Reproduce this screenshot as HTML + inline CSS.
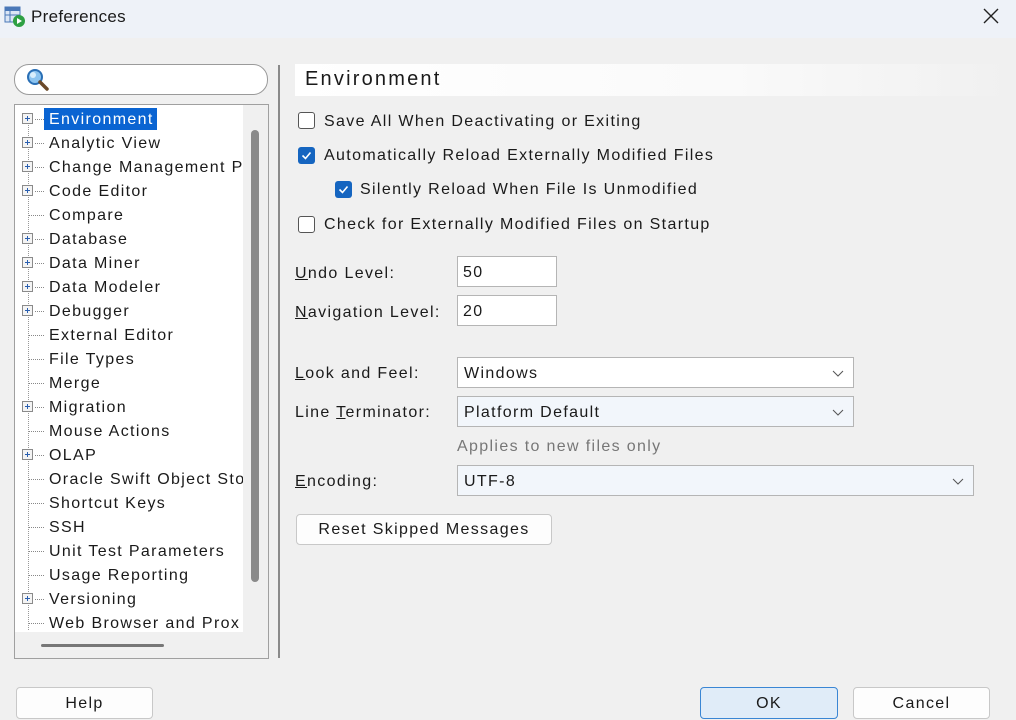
<!DOCTYPE html>
<html><head><style>
*{margin:0;padding:0;box-sizing:border-box}
body{width:1016px;height:718px;background:#f0f0f0;font-family:"Liberation Sans","DejaVu Sans",sans-serif;font-size:16px;color:#1a1a1a;position:relative;overflow:hidden;letter-spacing:1.35px}
.a{position:absolute}
.title{left:0;top:0;width:1016px;height:38px;background:#eef2f8}
.row{position:absolute;left:49px;height:22px;line-height:24px;white-space:nowrap}
.pl{position:absolute;left:22px;width:11px;height:11px;border:1px solid #8a8a8a;background:#f4f4f4}
.pl:before{content:"";position:absolute;left:2px;top:4px;width:5px;height:1px;background:#2a5fb0}
.pl:after{content:"";position:absolute;left:4px;top:2px;width:1px;height:5px;background:#2a5fb0}
.dh{position:absolute;height:0;border-top:1px dotted #888}
.cb{position:absolute;width:17px;height:17px;border:1.5px solid #555;border-radius:3px;background:#fff}
.cbx{position:absolute;width:17px;height:17px;border-radius:3px;background:#1565c0}
.cbx svg{position:absolute;left:3px;top:3px}
.lbl{position:absolute;white-space:nowrap;margin-top:2px}
.inp{position:absolute;background:#fff;border:1px solid #b5b5b5;height:31px;line-height:31px;padding-left:5px}
.sel{position:absolute;border:1px solid #b5b5b5;height:31px;line-height:31px;padding-left:6px}
.sel svg{position:absolute;right:9px;top:12px}
.btn{position:absolute;border:1px solid #c8c8c8;border-radius:4px;background:#fdfdfd;text-align:center;height:30px;line-height:30px}
u{text-decoration:underline}
</style></head><body>
<div class="a title"></div>
<svg class="a" style="left:4px;top:6px" width="22" height="22" viewBox="0 0 22 22"><rect x="1" y="1" width="15" height="15" fill="#dbe6f5" stroke="#4a78b8"/><rect x="1" y="1" width="15" height="4" fill="#4a78b8"/><line x1="1" y1="9" x2="16" y2="9" stroke="#4a78b8"/><line x1="6" y1="5" x2="6" y2="16" stroke="#4a78b8"/><circle cx="15" cy="15" r="6" fill="#2ea043"/><path d="M13 12 L18 15 L13 18 Z" fill="#fff"/></svg>
<div class="a" style="left:31px;top:7px;font-size:17px;letter-spacing:0.3px">Preferences</div>
<svg class="a" style="left:983px;top:8px" width="16" height="16"><path d="M1 1L15 15M15 1L1 15" stroke="#222" stroke-width="1.4"/></svg>

<div class="a" style="left:14px;top:64px;width:254px;height:31px;border:1px solid #9a9a9a;border-radius:15px;background:#fff"></div>
<svg class="a" style="left:25px;top:67px" width="26" height="26"><circle cx="10" cy="10" r="7" fill="#8cc4f0" stroke="#2a6fb5" stroke-width="2"/><circle cx="8" cy="8" r="3" fill="#d8eefc"/><line x1="15" y1="15" x2="22" y2="22" stroke="#6b4a2a" stroke-width="3.5" stroke-linecap="round"/></svg>

<div class="a" style="left:14px;top:104px;width:255px;height:555px;border:1px solid #a0a0a0;background:#f0f0f0"></div>
<div class="a" style="left:15px;top:105px;width:228px;height:527px;background:#fff"></div>
<div class="a" style="left:28px;top:120px;height:510px;border-left:1px dotted #999"></div>
<div class="a" style="left:251px;top:130px;width:8px;height:452px;background:#8a8a8a;border-radius:4px"></div>
<div class="a" style="left:41px;top:644px;width:123px;height:3px;background:#777;border-radius:2px"></div>
<div class="a" style="left:44px;top:108px;width:113px;height:22px;background:#0a64d2"></div>

<div class="a" style="left:278px;top:65px;width:2px;height:593px;background:#8a8a8a"></div>

<div id="tree"></div>
<script>
var items=[["Environment",1],["Analytic View",1],["Change Management P",1],["Code Editor",1],["Compare",0],["Database",1],["Data Miner",1],["Data Modeler",1],["Debugger",1],["External Editor",0],["File Types",0],["Merge",0],["Migration",1],["Mouse Actions",0],["OLAP",1],["Oracle Swift Object Sto",0],["Shortcut Keys",0],["SSH",0],["Unit Test Parameters",0],["Usage Reporting",0],["Versioning",1],["Web Browser and Prox",0]];
var h="";
items.forEach(function(it,i){var y=108+i*24;
if(it[1])h+='<div class="pl" style="top:'+(y+5)+'px"></div><div class="dh" style="left:35px;top:'+(y+11)+'px;width:9px"></div>';
else h+='<div class="dh" style="left:29px;top:'+(y+11)+'px;width:15px"></div>';
h+='<div class="row" style="top:'+y+'px;'+(i==0?'color:#fff':'')+';width:194px;overflow:hidden">'+it[0]+'</div>';});
document.getElementById('tree').innerHTML=h;
</script>

<div class="a" style="left:295px;top:64px;width:720px;height:32px;background:linear-gradient(90deg,#fff 0%,#fafafa 60%,#f0f0f0 100%)"></div>
<div class="a" style="left:305px;top:68px;font-size:20px;letter-spacing:2.2px">Environment</div>

<div class="cb" style="left:298px;top:112px"></div><div class="lbl" style="left:324px;top:111px">Save All When Deactivating or Exiting</div>
<div class="cbx" style="left:298px;top:147px"><svg width="11" height="11"><path d="M1.5 5.5L4.5 8.5L9.5 2.5" stroke="#fff" stroke-width="1.6" fill="none"/></svg></div><div class="lbl" style="left:324px;top:145px">Automatically Reload Externally Modified Files</div>
<div class="cbx" style="left:335px;top:181px"><svg width="11" height="11"><path d="M1.5 5.5L4.5 8.5L9.5 2.5" stroke="#fff" stroke-width="1.6" fill="none"/></svg></div><div class="lbl" style="left:360px;top:179px">Silently Reload When File Is Unmodified</div>
<div class="cb" style="left:298px;top:216px"></div><div class="lbl" style="left:324px;top:214px">Check for Externally Modified Files on Startup</div>

<div class="lbl" style="left:295px;top:263px"><u>U</u>ndo Level:</div>
<div class="inp" style="left:457px;top:256px;width:100px">50</div>
<div class="lbl" style="left:295px;top:302px"><u>N</u>avigation Level:</div>
<div class="inp" style="left:457px;top:295px;width:100px">20</div>

<div class="lbl" style="left:295px;top:363px"><u>L</u>ook and Feel:</div>
<div class="sel" style="left:457px;top:357px;width:397px;background:#fff">Windows<svg width="12" height="8"><path d="M1 1L6 6L11 1" stroke="#555" fill="none"/></svg></div>
<div class="lbl" style="left:295px;top:402px">Line <u>T</u>erminator:</div>
<div class="sel" style="left:457px;top:396px;width:397px;background:#f2f6fb">Platform Default<svg width="12" height="8"><path d="M1 1L6 6L11 1" stroke="#555" fill="none"/></svg></div>
<div class="lbl" style="left:457px;top:436px;color:#777">Applies to new files only</div>
<div class="lbl" style="left:295px;top:471px"><u>E</u>ncoding:</div>
<div class="sel" style="left:457px;top:465px;width:517px;background:#f2f6fb">UTF-8<svg width="12" height="8"><path d="M1 1L6 6L11 1" stroke="#555" fill="none"/></svg></div>

<div class="btn" style="left:296px;top:514px;width:256px;height:31px">Reset Skipped Messages</div>

<div class="btn" style="left:16px;top:687px;width:137px;height:32px;line-height:32px">Help</div>
<div class="btn" style="left:700px;top:687px;width:138px;height:32px;line-height:32px;background:#e0ecf8;border:1.5px solid #3a86d4">OK</div>
<div class="btn" style="left:853px;top:687px;width:137px;height:32px;line-height:32px">Cancel</div>
</body></html>
